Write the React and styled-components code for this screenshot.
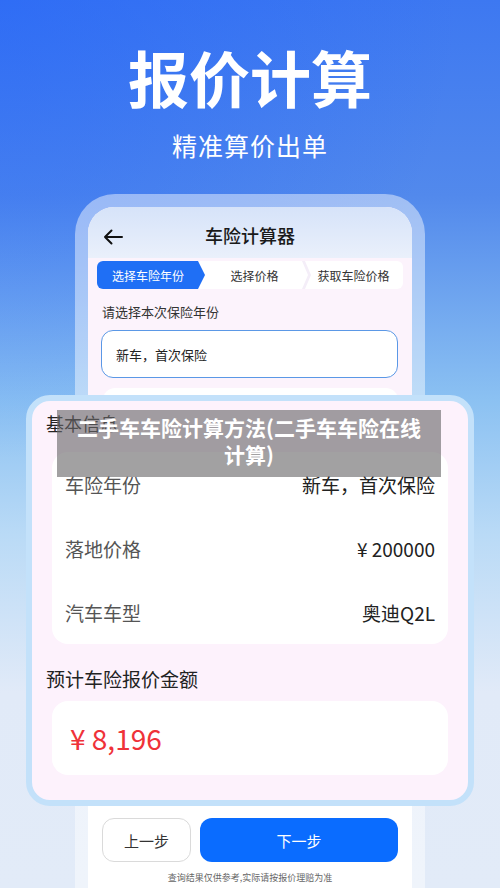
import styled, { createGlobalStyle } from 'styled-components';

const GlobalStyle = createGlobalStyle`
  html, body {
    margin: 0;
    padding: 0;
  }
  body {
    font-family: "Noto Sans CJK SC", "Noto Sans", sans-serif;
  }
  * {
    box-sizing: border-box;
  }
`;

const Page = styled.div`
  position: relative;
  width: 500px;
  height: 888px;
  overflow: hidden;
  display: flex;
  flex-direction: column;
  align-items: center;
  background:
    radial-gradient(circle at 0 0, rgba(30, 95, 250, 0.45), rgba(30, 95, 250, 0) 45%),
    linear-gradient(180deg, #3d78f1 0%, #5289ec 22%, #8bc1f2 45%, #b9daf6 60%, #e1eaf8 78%, #e2ebf8 100%);
`;

const Headline = styled.h1`
  margin: 40px 0 0;
  font-size: 61px;
  line-height: 74px;
  font-weight: 700;
  color: #fff;
`;

const Tagline = styled.div`
  margin-top: 16px;
  font-size: 25px;
  line-height: 30px;
  color: #fff;
  letter-spacing: 1px;
`;

const Phone = styled.div`
  margin-top: 34px;
  width: 350px;
  flex: 1;
  display: flex;
  padding: 13px 13px 0;
  border-radius: 40px 40px 0 0;
  background: rgba(255, 255, 255, 0.45);
`;

const Screen = styled.div`
  flex: 1;
  display: flex;
  flex-direction: column;
  border-radius: 26px 26px 0 0;
  overflow: hidden;
  background: #fcf3fc;
`;

const TopBar = styled.div`
  height: 51px;
  padding: 4px 15px 0;
  display: grid;
  grid-template-columns: 1fr auto 1fr;
  align-items: center;
  background: linear-gradient(180deg, #d6e3f9, #eaf0fb);
`;

const Back = styled.div`
  display: flex;
  padding-top: 4px;
`;

const ScreenTitle = styled.div`
  font-size: 18px;
  font-weight: 500;
  color: #1a1a1a;
`;

const Steps = styled.div`
  margin: 3px 9px 0;
  height: 28px;
  display: flex;
  background: #fff;
  border-radius: 6px;
`;

const Step = styled.div`
  position: relative;
  flex: ${p => (p.$active ? '0 0 108px' : '1')};
  display: flex;
  align-items: center;
  justify-content: center;
  padding-right: ${p => (p.$active ? '6px' : '0')};
  font-size: 12px;
  color: ${p => (p.$active ? '#fff' : '#333')};
  background: ${p => (p.$active ? '#1f6ff5' : 'transparent')};
  border-radius: 6px 0 0 6px;
  clip-path: ${p =>
    p.$active
      ? 'polygon(0 0, calc(100% - 7px) 0, 100% 50%, calc(100% - 7px) 100%, 0 100%)'
      : 'none'};

  &::before {
    content: '';
    display: ${p => (p.$divider ? 'block' : 'none')};
    position: absolute;
    left: -2px;
    top: 0;
    width: 9px;
    height: 100%;
    background: #f4eef8;
    clip-path: polygon(0 0, 3px 0, 9px 50%, 3px 100%, 0 100%, 6px 50%);
  }
`;

const FieldLabel = styled.div`
  margin-top: 13px;
  padding: 0 14px;
  font-size: 13px;
  line-height: 20px;
  color: #333;
`;

const Select = styled.div`
  margin: 8px 14px 0 13px;
  height: 48px;
  display: flex;
  align-items: center;
  padding-left: 14px;
  border: 1px solid #5b98e6;
  border-radius: 12px;
  background: #fff;
  font-size: 13px;
  color: #222;
`;

const Panel = styled.div`
  flex: 1;
  margin: 10px 14px 0 15px;
  border-radius: 12px;
  background: #fff;
`;

const Footer = styled.div`
  margin-top: 10px;
  padding: 12px 14px 4px;
  background: #fff;
`;

const Buttons = styled.div`
  display: grid;
  grid-template-columns: 89px 1fr;
  gap: 9px;
`;

const Button = styled.div`
  height: 44px;
  display: flex;
  align-items: center;
  justify-content: center;
  border-radius: 12px;
  font-size: 15px;
  color: ${p => (p.$primary ? '#fff' : '#333')};
  background: ${p => (p.$primary ? '#0a6cff' : '#fff')};
  border: ${p => (p.$primary ? 'none' : '1.5px solid #dadada')};
`;

const Note = styled.div`
  margin-top: 10px;
  font-size: 9px;
  line-height: 12px;
  color: #666;
  text-align: center;
`;

const Sheet = styled.div`
  position: absolute;
  left: 26px;
  top: 395px;
  width: 448px;
  height: 411px;
  padding: 9px 20px 0;
  border: 6px solid #c3e1fa;
  border-radius: 24px;
  background: #fdf2fc;
`;

const SectionTitle = styled.div`
  margin: ${p => p.$gap || 0}px 0 0 -6px;
  font-size: ${p => p.$size || 18}px;
  line-height: 26px;
  color: #222;
`;

const InfoCard = styled.div`
  margin-top: 16px;
  padding: 0 13px;
  border-radius: 16px;
  background: #fff;
`;

const InfoRow = styled.div`
  height: 64px;
  display: flex;
  align-items: center;
  justify-content: space-between;
  font-size: 19px;
`;

const InfoLabel = styled.span`
  color: #555;
`;

const InfoValue = styled.span`
  color: #222;
`;

const AmountCard = styled.div`
  margin-top: 9px;
  height: 74px;
  display: flex;
  align-items: center;
  padding-left: 18px;
  border-radius: 16px;
  background: #fff;
  font-size: 28px;
  color: #ef3239;
`;

const Banner = styled.div`
  position: absolute;
  left: 57px;
  top: 410px;
  width: 384px;
  height: 67px;
  padding: 4px 12px 0;
  background: rgba(105, 103, 105, 0.62);
  color: #fff;
  font-size: 21px;
  font-weight: 700;
  line-height: 27px;
  text-align: center;
`;

const info = [
  ['车险年份', '新车，首次保险'],
  ['落地价格', '¥ 200000'],
  ['汽车车型', '奥迪Q2L'],
];

function BackArrow() {
  return (
    <svg width="20" height="16" viewBox="0 0 20 16" fill="none">
      <path d="M19 8H2M8.5 1.5L2 8l6.5 6.5" stroke="#111" strokeWidth="2" strokeLinecap="round" strokeLinejoin="round" />
    </svg>
  );
}

export default function App() {
  return (
    <Page>
      <GlobalStyle />
      <Headline>报价计算</Headline>
      <Tagline>精准算价出单</Tagline>

      <Phone>
        <Screen>
          <TopBar>
            <Back><BackArrow /></Back>
            <ScreenTitle>车险计算器</ScreenTitle>
            <span />
          </TopBar>
          <Steps>
            <Step $active>选择车险年份</Step>
            <Step>选择价格</Step>
            <Step $divider>获取车险价格</Step>
          </Steps>
          <FieldLabel>请选择本次保险年份</FieldLabel>
          <Select>新车，首次保险</Select>
          <Panel />
          <Footer>
            <Buttons>
              <Button>上一步</Button>
              <Button $primary>下一步</Button>
            </Buttons>
            <Note>查询结果仅供参考,实际请按报价理赔为准</Note>
          </Footer>
        </Screen>
      </Phone>

      <Sheet>
        <SectionTitle>基本信息</SectionTitle>
        <InfoCard>
          {info.map(([label, value]) => (
            <InfoRow key={label}>
              <InfoLabel>{label}</InfoLabel>
              <InfoValue>{value}</InfoValue>
            </InfoRow>
          ))}
        </InfoCard>
        <SectionTitle $gap={22} $size={19}>预计车险报价金额</SectionTitle>
        <AmountCard>¥ 8,196</AmountCard>
      </Sheet>

      <Banner>二手车车险计算方法(二手车车险在线计算)</Banner>
    </Page>
  );
}
